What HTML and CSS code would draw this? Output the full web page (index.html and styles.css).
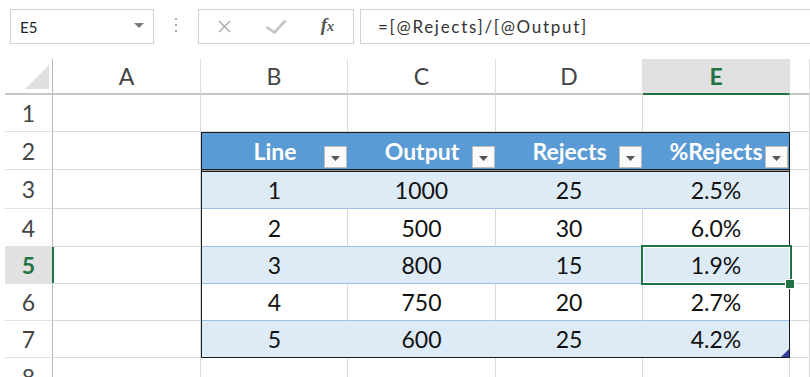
FILE: index.html
```html
<!DOCTYPE html>
<html lang="en">
<head>
<meta charset="utf-8">
<title>Sheet</title>
<link rel="stylesheet" href="styles.css">
</head>
<body>
<div class="fbar">
  <div class="namebox">
    <span class="nb-text">E5</span>
    <svg class="nb-arrow" width="10" height="5" viewBox="0 0 10 5"><path d="M0 0h10L5 5z" fill="#7a7a7a"/></svg>
  </div>
  <div class="vdots"><i></i><i></i><i></i></div>
  <div class="fxbox">
    <span class="slot"><svg width="13" height="13" viewBox="0 0 13 13"><path d="M1 1L12 12M12 1L1 12" stroke="#a8a8a8" stroke-width="1.4" fill="none"/></svg></span>
    <span class="slot"><svg width="22" height="15" viewBox="0 0 22 15"><path d="M1.5 8L9.5 13.5L20.5 1.5" stroke="#c4c4c4" stroke-width="2.6" fill="none"/></svg></span>
    <span class="slot"><span class="fx">f<span class="fx-x">x</span></span></span>
  </div>
  <div class="finput">=[@Rejects]/[@Output]</div>
</div>

<div class="sheet">
  <div class="corner"><span class="corner-tri"></span></div>
  <div class="ch">A</div>
  <div class="ch">B</div>
  <div class="ch">C</div>
  <div class="ch">D</div>
  <div class="ch sel">E</div>
  <div class="ch"></div>

  <div class="rh">1</div>
  <div class="c"></div><div class="c"></div><div class="c"></div><div class="c"></div><div class="c"></div><div class="c"></div>

  <div class="rh">2</div><div class="c"></div><div class="c"></div>
  <div class="rh">3</div><div class="c"></div><div class="c"></div>
  <div class="rh">4</div><div class="c"></div><div class="c"></div>
  <div class="rh sel">5</div><div class="c"></div><div class="c"></div>
  <div class="rh">6</div><div class="c"></div><div class="c"></div>
  <div class="rh">7</div><div class="c"></div><div class="c"></div>

  <div class="rh">8</div>
  <div class="c"></div><div class="c"></div><div class="c"></div><div class="c"></div><div class="c"></div><div class="c"></div>

  <div class="tbl">
    <div class="th">Line<span class="fbtn"><svg width="9" height="5" viewBox="0 0 9 5"><path d="M0 0h9L4.5 5z" fill="#555"/></svg></span></div>
    <div class="th">Output<span class="fbtn"><svg width="9" height="5" viewBox="0 0 9 5"><path d="M0 0h9L4.5 5z" fill="#555"/></svg></span></div>
    <div class="th">Rejects<span class="fbtn"><svg width="9" height="5" viewBox="0 0 9 5"><path d="M0 0h9L4.5 5z" fill="#555"/></svg></span></div>
    <div class="th">%Rejects<span class="fbtn"><svg width="9" height="5" viewBox="0 0 9 5"><path d="M0 0h9L4.5 5z" fill="#555"/></svg></span></div>

    <div class="td b">1</div><div class="td b">1000</div><div class="td b">25</div><div class="td b end">2.5%</div>
    <div class="td">2</div><div class="td">500</div><div class="td">30</div><div class="td end">6.0%</div>
    <div class="td b">3</div><div class="td b">800</div><div class="td b">15</div><div class="td b end sel">1.9%</div>
    <div class="td">4</div><div class="td">750</div><div class="td">20</div><div class="td end">2.7%</div>
    <div class="td b last">5</div><div class="td b last">600</div><div class="td b last">25</div><div class="td b last end corner-cell">4.2%</div>
  </div>
</div>
</body>
</html>
```
FILE: styles.css
```css
* { box-sizing: border-box; }

html, body {
  margin: 0;
  padding: 0;
  background: #fff;
}

body {
  width: 810px;
  height: 377px;
  overflow: hidden;
  font-family: Lato, "Liberation Sans", sans-serif;
}

/* ---------- formula bar ---------- */
.fbar {
  display: flex;
  height: 44px;
  padding-top: 9px;
  padding-left: 10px;
}

.namebox {
  width: 144px;
  border: 1px solid #d2d2d2;
  display: flex;
  align-items: center;
  justify-content: space-between;
  padding: 0 9px 0 9px;
  font-size: 15px;
  color: #222;
}

.nb-arrow { margin-top: -2px; }

.vdots {
  width: 44px;
  display: flex;
  flex-direction: column;
  align-items: center;
  justify-content: center;
  gap: 4px;
  padding-bottom: 3px;
}

.vdots i {
  display: block;
  width: 2px;
  height: 2px;
  background: #aaaaaa;
}

.fxbox {
  width: 156px;
  border: 1px solid #d2d2d2;
  display: flex;
}

.fxbox .slot {
  flex: 1;
  display: flex;
  align-items: center;
  justify-content: center;
}

.fx {
  font-family: "Liberation Serif", serif;
  font-style: italic;
  font-weight: bold;
  font-size: 19px;
  color: #555;
  margin-top: -3px;
}

.fx-x {
  font-size: 14px;
}

.finput {
  flex: 1;
  margin-left: 6px;
  margin-right: -4px;
  border: 1px solid #d2d2d2;
  display: flex;
  align-items: center;
  padding-left: 17px;
  padding-bottom: 1px;
  font-size: 17px;
  letter-spacing: 1.7px;
  color: #333;
}

/* ---------- sheet grid ---------- */
.sheet {
  margin-top: 15px;
  padding-left: 5px;
  display: grid;
  grid-template-columns: 48px 148px 147px 148px 147px 147px 1fr;
  grid-template-rows: 36px 37px 38px 39px 38px 37px 37px 37px 38px;
  font-size: 23px;
}

.corner {
  border-right: 1px solid #b8b8b8;
  border-bottom: 2px solid #c8c8c8;
  display: flex;
  justify-content: flex-end;
  align-items: flex-end;
  padding: 0 3px 4px 0;
}

.corner-tri {
  display: block;
  width: 24px;
  height: 24px;
  background: #dfdfdf;
  clip-path: polygon(100% 0, 100% 100%, 0 100%);
}

.ch {
  border-right: 1px solid #dedede;
  border-bottom: 2px solid #c8c8c8;
  display: flex;
  align-items: center;
  justify-content: center;
  color: #444;
}

.ch.sel {
  background: #e1e1e1;
  color: #217346;
  font-weight: bold;
  border-bottom-color: #217346;
}

.rh {
  border-right: 1px solid #b8b8b8;
  border-bottom: 1px solid #e1e1e1;
  display: flex;
  align-items: center;
  justify-content: center;
  color: #444;
}

.rh.sel {
  background: #e1e1e1;
  color: #217346;
  font-weight: bold;
  border-right: 2px solid #217346;
  margin-right: -1px;
}

.c {
  border-right: 1px solid #dadada;
  border-bottom: 1px solid #dadada;
}

/* ---------- excel table ---------- */
.tbl {
  grid-column: 3 / 7;
  grid-row: 3 / 9;
  border: 1px solid #1c1c1c;
  display: grid;
  grid-template-columns: 146px 148px 147px 1fr;
  grid-template-rows: 39px 37px 38px 37px 37px 1fr;
  background: #fff;
}

.th {
  position: relative;
  display: flex;
  align-items: center;
  justify-content: center;
  color: #fff;
  font-weight: bold;
  border-bottom: 3px double #1c1c1c;
  background: linear-gradient(#5b9bd5, #5b9bd5) padding-box, linear-gradient(#9a9a9a, #9a9a9a) border-box;
  overflow: hidden;
  white-space: nowrap;
}

.fbtn {
  position: absolute;
  right: 1px;
  bottom: 1px;
  width: 23px;
  height: 22px;
  background: #fbfbfb;
  border: 1px solid #bdbdbd;
  display: flex;
  align-items: center;
  justify-content: center;
  padding-top: 2px;
}

.td {
  position: relative;
  display: flex;
  align-items: center;
  justify-content: center;
  color: #111;
  border-right: 1px solid #d9d9d9;
  border-bottom: 1px solid #9bc2e6;
}

.td.b {
  background: #ddebf7;
  border-right-color: #ddebf7;
}

.td.end { border-right: 0; }
.td.last { border-bottom: 0; }

.td.sel::after {
  content: "";
  position: absolute;
  left: -2px;
  top: -2px;
  right: -3px;
  bottom: -2px;
  border: 2px solid #217346;
  box-shadow: inset 0 0 0 1px #fff;
  z-index: 2;
}

.td.sel::before {
  content: "";
  position: absolute;
  right: -6px;
  bottom: -6px;
  width: 8px;
  height: 8px;
  background: #217346;
  border: 1px solid #fff;
  z-index: 3;
}

.td.corner-cell::after {
  content: "";
  position: absolute;
  right: 0;
  bottom: 0;
  width: 8px;
  height: 8px;
  background: #2f3e9c;
  clip-path: polygon(100% 0, 100% 100%, 0 100%);
}
```
